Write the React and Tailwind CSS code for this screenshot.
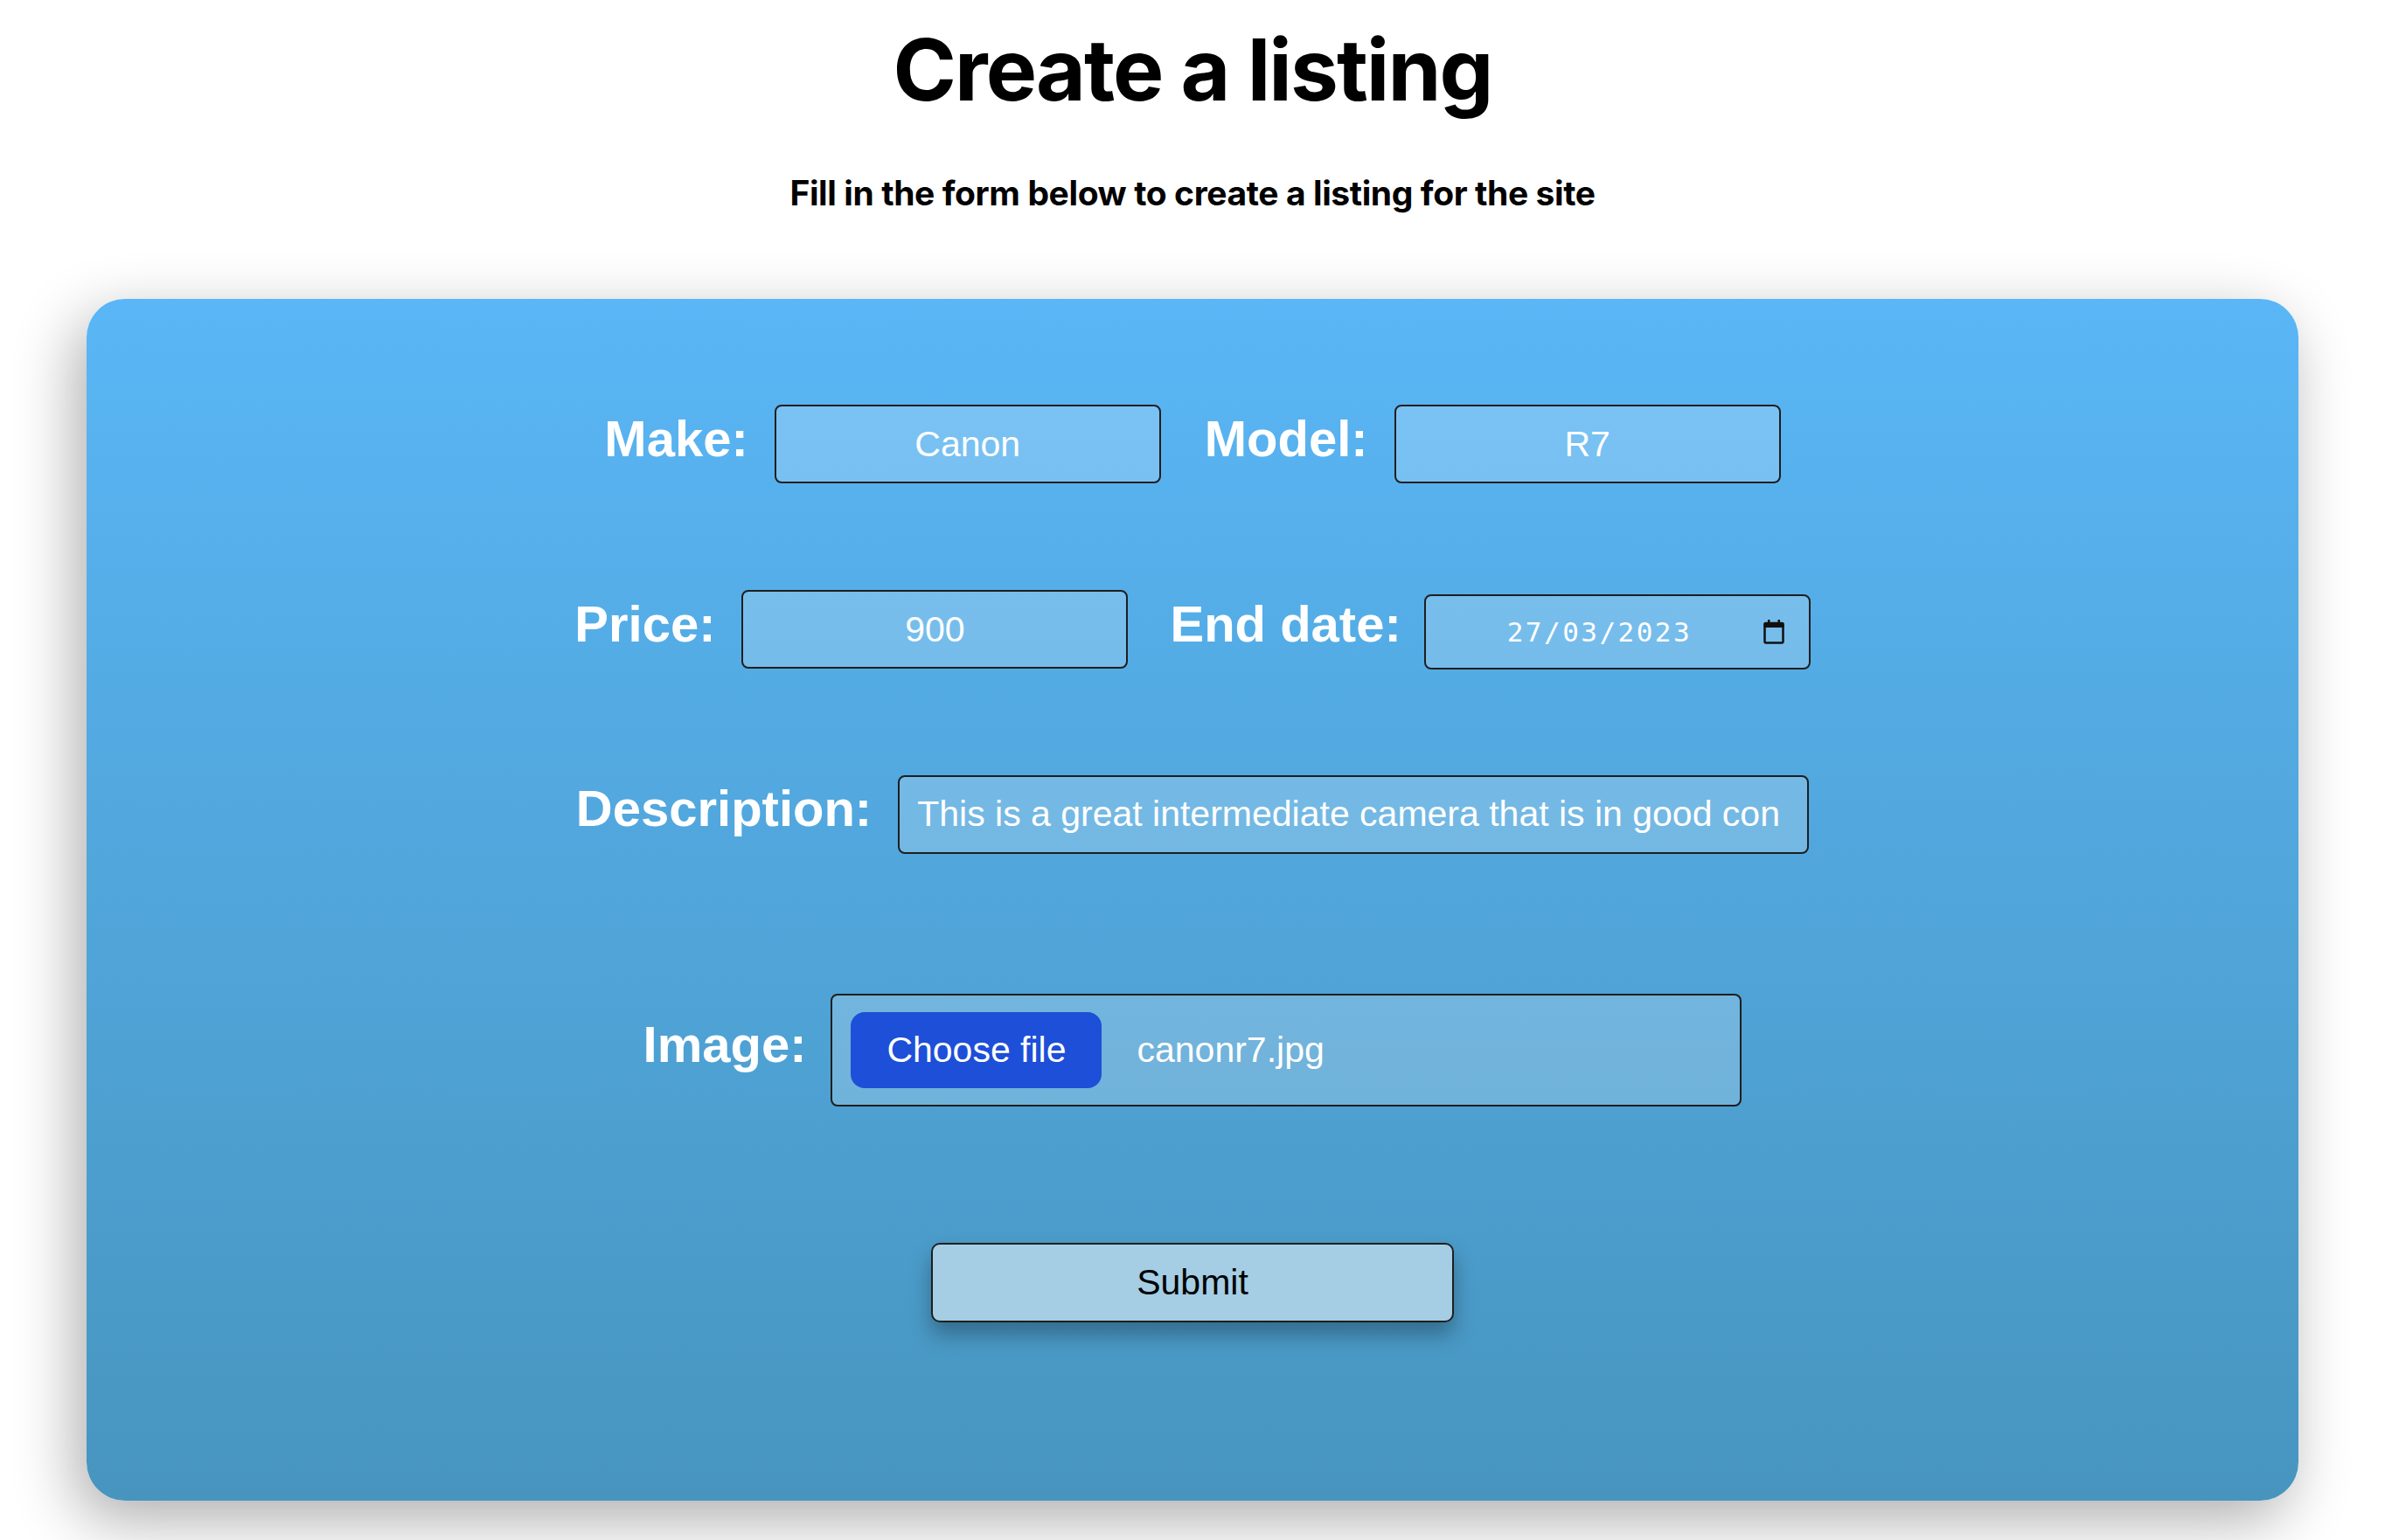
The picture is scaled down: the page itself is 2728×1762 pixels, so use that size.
import React from "react";

const labelCls =
  "text-white font-bold text-[58px] leading-none whitespace-nowrap [font-family:'Liberation_Sans',Arial,sans-serif]";
const inputCls =
  "h-[90px] rounded-[8px] border-2 border-[#1e1e1e] bg-white/20 text-white text-[41px] outline-none [font-family:'Liberation_Sans',Arial,sans-serif]";

function CalendarIcon() {
  return (
    <svg width="24" height="28" viewBox="0 0 24 28" fill="none">
      <rect x="5" y="0" width="2.5" height="5" fill="#111" />
      <rect x="16.5" y="0" width="2.5" height="5" fill="#111" />
      <path d="M2 3h20a1.5 1.5 0 0 1 1.5 1.5V9H0.5V4.5A1.5 1.5 0 0 1 2 3z" fill="#111" />
      <rect x="1.5" y="4" width="21" height="22.5" rx="1.5" stroke="#111" strokeWidth="2.5" />
    </svg>
  );
}

export default function App() {
  return (
    <div className="min-h-screen bg-white pb-[45px] [font-family:Inter,'Liberation_Sans',sans-serif]">
      <div className="h-[342px] flex flex-col items-center">
        <h1 className="mt-[31px] text-[98px] leading-none font-bold text-black tracking-[-0.02em]">
          Create a listing
        </h1>
        <p className="mt-[72px] text-[39px] leading-none font-bold text-black tracking-[-0.01em]">
          Fill in the form below to create a listing for the site
        </p>
      </div>

      <div className="mx-[99px] h-[1375px] rounded-[44px] bg-gradient-to-b from-[#5ab6f6] to-[#4795bf] shadow-[-12px_22px_70px_rgba(0,0,0,0.32)] pt-[121px] flex flex-col items-center">
        {/* Row 1 */}
        <div className="flex items-baseline">
          <span className={labelCls}>Make:</span>
          <input readOnly value="Canon" className={`${inputCls} ml-[30px] w-[442px] text-center`} />
          <span className={`${labelCls} ml-[50px]`}>Model:</span>
          <input readOnly value="R7" className={`${inputCls} ml-[30px] w-[442px] text-center`} />
        </div>

        {/* Row 2 */}
        <div className="mt-[122px] flex items-baseline">
          <span className={labelCls}>Price:</span>
          <input readOnly value="900" className={`${inputCls} ml-[30px] w-[442px] text-center`} />
          <span className={`${labelCls} ml-[48px]`}>End date:</span>
          <div className="ml-[26px] w-[442px] h-[86px] rounded-[8px] border-2 border-[#1e1e1e] bg-white/20 flex items-center pl-[93px] pr-[28px]">
            <span className="text-white text-[31px] tracking-[0.08em] [font-family:'DejaVu_Sans_Mono',monospace]">
              27/03/2023
            </span>
            <span className="ml-auto flex items-center">
              <CalendarIcon />
            </span>
          </div>
        </div>

        {/* Row 3 */}
        <div className="mt-[121px] flex items-baseline">
          <span className={labelCls}>Description:</span>
          <input
            readOnly
            value="This is a great intermediate camera that is in good condition and comes with a charger"
            className={`${inputCls} ml-[30px] w-[1042px] pl-[20px] pr-[30px]`}
          />
        </div>

        {/* Row 4 */}
        <div className="mt-[160px] flex items-baseline">
          <span className={labelCls}>Image:</span>
          <div className="ml-[28px] w-[1042px] h-[129px] rounded-[8px] border-2 border-[#1e1e1e] bg-white/20 flex items-center pl-[21px] [font-family:'Liberation_Sans',Arial,sans-serif]">
            <span className="h-[87px] w-[287px] rounded-[16px] bg-[#1d4fd8] text-white text-[41px] flex items-center justify-center">
              Choose file
            </span>
            <span className="ml-[40px] text-white text-[41px]">canonr7.jpg</span>
          </div>
        </div>

        {/* Submit */}
        <button className="mt-[156px] w-[598px] h-[91px] rounded-[10px] border-2 border-[#1e1e1e] bg-white/50 text-black text-[41px] shadow-[0_14px_24px_rgba(0,0,0,0.3)] [font-family:'Liberation_Sans',Arial,sans-serif]">
          Submit
        </button>
      </div>
    </div>
  );
}
